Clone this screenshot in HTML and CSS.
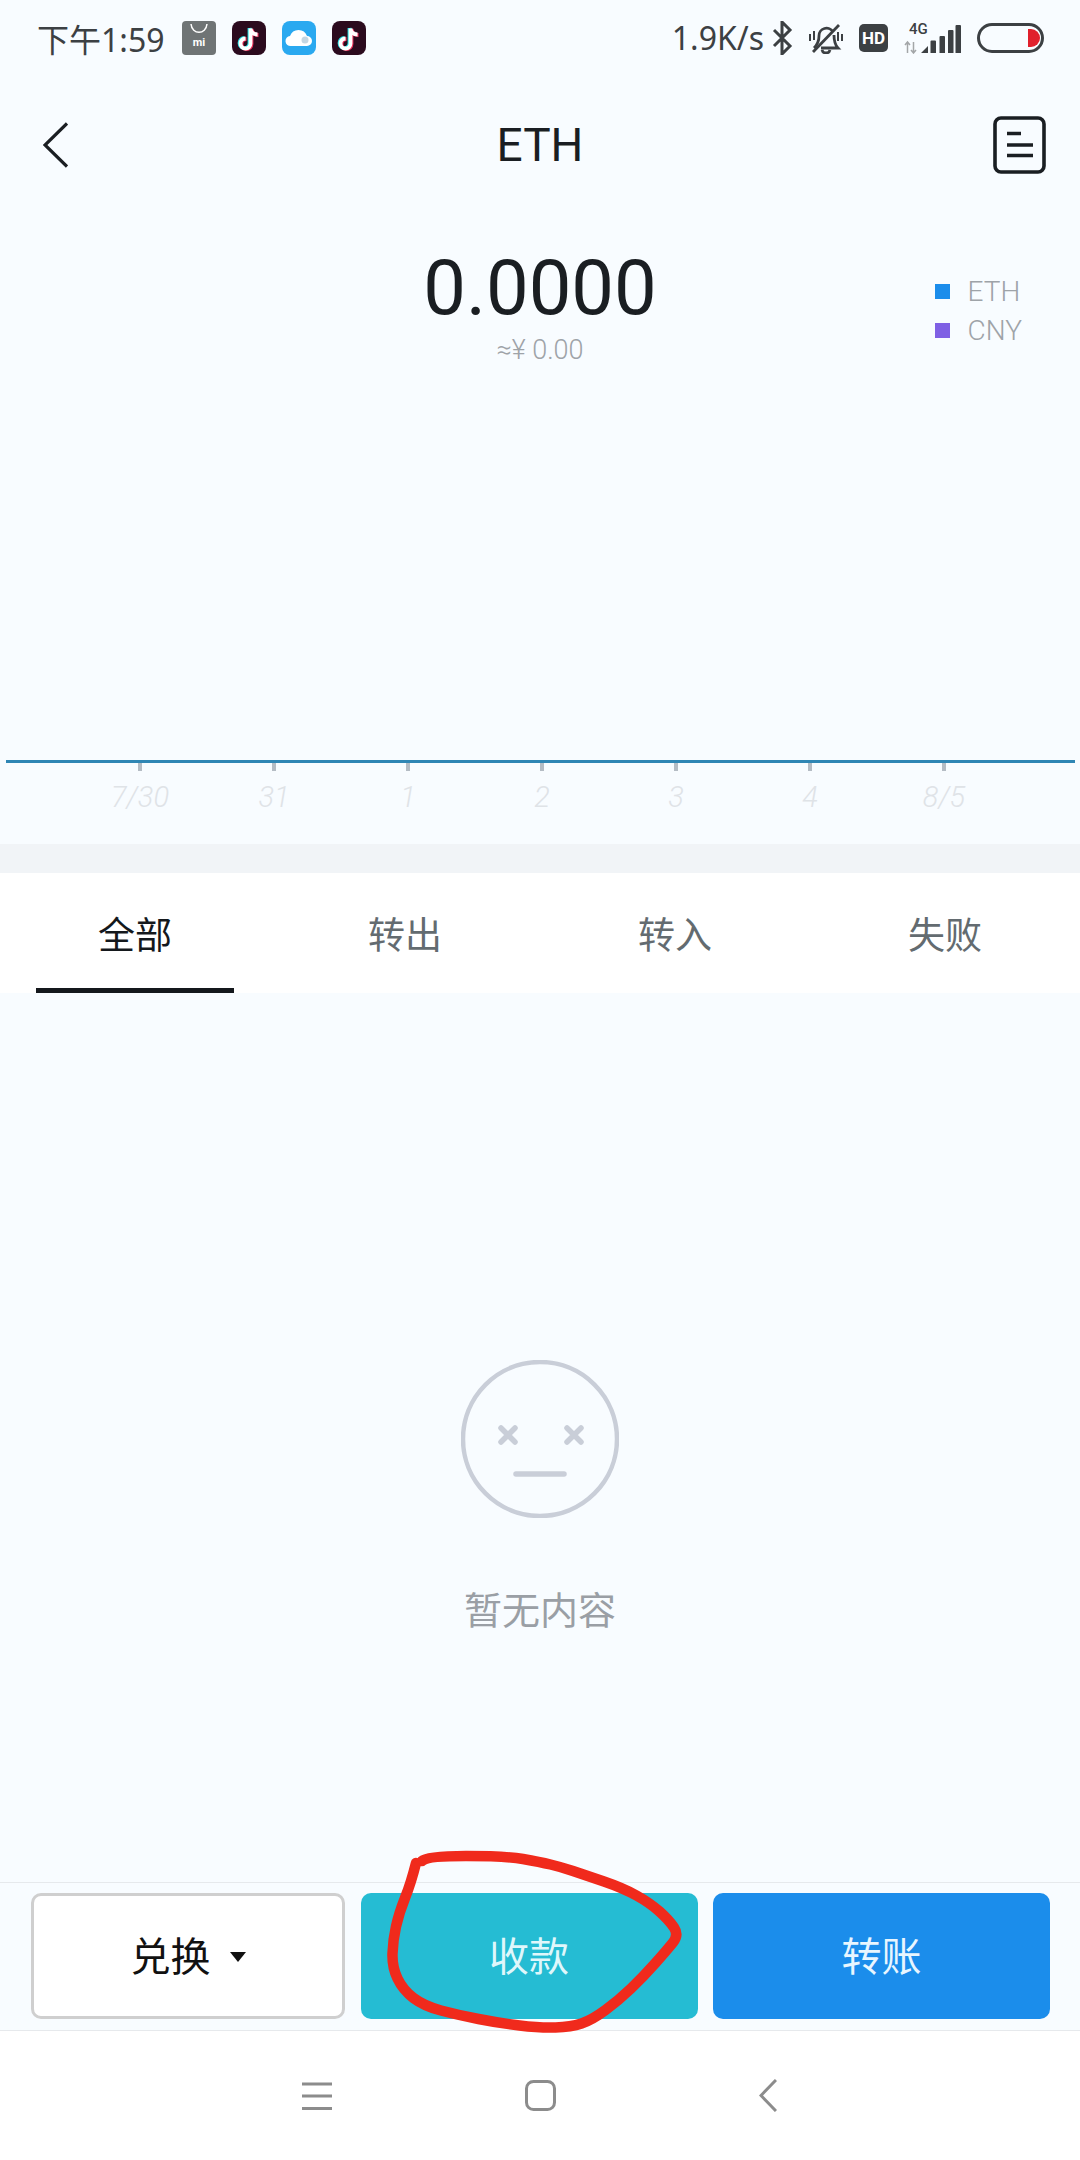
FILE: index.html
```html
<!DOCTYPE html>
<html lang="zh-CN">
<head>
    <meta charset="UTF-8">
    <meta name="viewport" content="width=device-width, initial-scale=1.0">
    <title>ETH</title>
    <link rel="stylesheet" href="styles.css">
</head>
<body>
    <div class="page">
        <svg class="defs" width="0" height="0">
            <symbol id="tiktok" viewBox="0 0 34 34">
                <rect width="34" height="34" rx="8" fill="#2b0b1e"/>
                <path d="M17.500 7v15a5 5 0 1 1-5-5M17.500 7c.5 3.500 3 6 7 6" fill="none" stroke="#25e0e6" stroke-width="3.800"/>
                <path d="M19.500 8v15a5 5 0 1 1-5-5M19.500 8c.5 3.500 3 6 7 6" fill="none" stroke="#f0305a" stroke-width="3.800"/>
                <path d="M18.500 7.500v15a5 5 0 1 1-5-5M18.500 7.500c.5 3.500 3 6 7 6" fill="none" stroke="#fff" stroke-width="3.800"/>
            </symbol>
        </svg>

        <div class="status">
            <span class="time">下午1:59</span>
            <div class="notifs">
                <svg class="notif" viewBox="0 0 34 34">
                    <rect width="34" height="34" rx="4" fill="#6f7475"/>
                    <path d="M9 3c1 11 15 11 16 0" fill="none" stroke="#fff" stroke-width="1.500"/>
                    <text x="17" y="25" class="mi-text">mi</text>
                </svg>
                <svg class="notif"><use href="#tiktok"/></svg>
                <svg class="notif" viewBox="0 0 34 34">
                    <rect width="34" height="34" rx="8" fill="#2aa9f0"/>
                    <path d="M9 25a5 5 0 0 1-1-10 9 9 0 0 1 17 0 5 5 0 0 1 0 10z" fill="#fff"/>
                    <circle cx="23" cy="19" r="3.500" fill="#c5d6e2"/>
                </svg>
                <svg class="notif"><use href="#tiktok"/></svg>
            </div>
            <div class="sysicons">
                <span class="speed">1.9K/s</span>
                <svg class="bt" width="21" height="34" viewBox="0 0 21 34">
                    <path d="M2 9l16 16-8 8V1l8 8L2 25" fill="none" stroke="#3c4043" stroke-width="3"/>
                </svg>
                <svg class="sys" width="34" height="31" viewBox="0 0 34 31">
                    <path d="M5 25c3-3 5-6 5-12a7.500 7.500 0 0 1 14-4M25 12c0 6 1 10 4 13H12M13 27c1 4 7 4 8 0" fill="none" stroke="#3c4043" stroke-width="2.800"/>
                    <path d="M4 29L30 2" stroke="#3c4043" stroke-width="2.800"/>
                    <path d="M1 11v7M5 8v9M29 9v9M33 11v7" stroke="#3c4043" stroke-width="2"/>
                </svg>
                <span class="hd sys">HD</span>
                <svg class="sys" width="57" height="31" viewBox="0 0 57 31">
                    <text x="5" y="11" class="net-text">4G</text>
                    <path d="M3.500 19v11M1 22l2.500-3 2.500 3M9.500 30V19M7 27l2.500 3 2.500-3" fill="none" stroke="#a3a6a8" stroke-width="1.500"/>
                    <path d="M17 30l7-7v7zM26.500 18.500a1 1 0 0 1 1-1h3.500a1 1 0 0 1 1 1V30h-5.500zM35.500 14a1 1 0 0 1 1-1h3.500a1 1 0 0 1 1 1v16h-5.500zM44 8a1 1 0 0 1 1-1h3.500a1 1 0 0 1 1 1v22H44zM51.500 3a1 1 0 0 1 1-1H56a1 1 0 0 1 1 1v27h-5.500z" fill="#3c4043"/>
                </svg>
                <svg class="sys" width="67" height="30" viewBox="0 0 67 30">
                    <rect x="1.500" y="1.500" width="64" height="27" rx="13.500" fill="none" stroke="#3c4043" stroke-width="3"/>
                    <path d="M51 6h3a9 9 0 0 1 0 18h-3z" fill="#e0202c"/>
                </svg>
            </div>
        </div>

        <div class="topbar">
            <svg width="25" height="46" viewBox="0 0 25 46">
                <path d="M24 1.500L2 23l22 21.500" fill="none" stroke="#1a1e22" stroke-width="3.200"/>
            </svg>
            <span class="title">ETH</span>
            <svg class="doc" width="53" height="58" viewBox="0 0 53 58">
                <rect x="2" y="2" width="49" height="54" rx="6" fill="none" stroke="#1a1e22" stroke-width="3.600"/>
                <path d="M14 17.500h14M14 29h26M14 39.500h26" stroke="#1a1e22" stroke-width="3.400"/>
            </svg>
        </div>

        <div class="balance">
            <div></div>
            <div class="amount">
                <div class="amount-value">0.0000</div>
                <div class="amount-cny">≈¥ 0.00</div>
            </div>
            <div class="legend">
                <div class="legend-row"><i class="dot dot-eth"></i>ETH</div>
                <div class="legend-row"><i class="dot dot-cny"></i>CNY</div>
            </div>
        </div>

        <div class="chart">
            <div class="chart-line"></div>
            <div class="axis">
                <div class="axis-item"><i class="tick"></i><span>7/30</span></div>
                <div class="axis-item"><i class="tick"></i><span>31</span></div>
                <div class="axis-item"><i class="tick"></i><span>1</span></div>
                <div class="axis-item"><i class="tick"></i><span>2</span></div>
                <div class="axis-item"><i class="tick"></i><span>3</span></div>
                <div class="axis-item"><i class="tick"></i><span>4</span></div>
                <div class="axis-item"><i class="tick"></i><span>8/5</span></div>
            </div>
        </div>

        <div class="band"></div>

        <div class="tabs">
            <div class="tab active">全部</div>
            <div class="tab">转出</div>
            <div class="tab">转入</div>
            <div class="tab">失败</div>
        </div>

        <div class="empty">
            <svg width="158" height="158" viewBox="0 0 158 158">
                <circle cx="79" cy="79" r="77" fill="none" stroke="#c9ced8" stroke-width="4.500"/>
                <path d="M40 68l14 14M54 68L40 82M106 68l14 14M120 68l-14 14" stroke="#c9ced8" stroke-width="5.500" stroke-linecap="round"/>
                <path d="M55 114h48" stroke="#c9ced8" stroke-width="5.500" stroke-linecap="round"/>
            </svg>
            <div class="empty-text">暂无内容</div>
        </div>

        <div class="actions">
            <div class="btn btn-swap">兑换<i class="caret"></i></div>
            <div class="btn btn-receive">收款</div>
            <div class="btn btn-send">转账</div>
        </div>

        <div class="nav">
            <svg class="nav-menu" width="30" height="28" viewBox="0 0 30 28">
                <path d="M0 2h30M0 14h30M0 26.500h30" stroke="#8c8c8c" stroke-width="3"/>
            </svg>
            <svg class="nav-home" width="31" height="31" viewBox="0 0 31 31">
                <rect x="1.500" y="1.500" width="28" height="28" rx="7" fill="none" stroke="#8c8c8c" stroke-width="3"/>
            </svg>
            <svg class="nav-back" width="18" height="33" viewBox="0 0 18 33">
                <path d="M17 1L2 16.500 17 32" fill="none" stroke="#8c8c8c" stroke-width="3"/>
            </svg>
        </div>

        <!-- red marker drawn over the screenshot -->
        <svg class="scribble" width="1080" height="2160" viewBox="0 0 1080 2160">
            <path d="M416 1863Q411 1883 405 1898Q399 1913 396 1926.500Q393 1940 392.500 1953.500Q392 1967 397.500 1978.500Q403 1990 413.500 1998Q424 2006 441 2010.500Q458 2015 478.500 2019Q499 2023 519.500 2025.500Q540 2028 555.500 2027.500Q571 2027 581.500 2023.500Q592 2020 605.500 2010Q619 2000 631 1988.500Q643 1977 655 1963.500Q667 1950 673 1942.500Q679 1935 674 1927.500Q669 1920 659.500 1911.500Q650 1903 636.500 1895.500Q623 1888 604 1881.500Q585 1875 573 1871Q561 1867 550.500 1864.500Q540 1862 523 1859Q506 1856 466 1856Q427 1856 422 1861" fill="none" stroke="#f02a1c" stroke-width="10.500" stroke-linecap="round" stroke-linejoin="round"/>
        </svg>
    </div>
</body>
</html>
```

FILE: styles.css
```css
* {
    box-sizing: border-box;
}
body {
    margin: 0;
    font-family: Roboto, "Noto Sans CJK SC", sans-serif;
}
.page {
    position: relative;
    width: 1080px;
    height: 2160px;
    overflow: hidden;
    display: flex;
    flex-direction: column;
    background-color: #f8fcff;
}
.defs {
    position: absolute;
}

/* status bar */
.status {
    display: flex;
    align-items: center;
    height: 76px;
    padding: 0 36px 0 37px;
    color: #3c4043;
}
.time {
    width: 145px;
    font-family: "Noto Sans", "Noto Sans CJK SC", sans-serif;
    font-size: 32px;
    white-space: nowrap;
}
.notifs {
    display: flex;
    gap: 16px;
}
.notif {
    width: 34px;
    height: 34px;
}
.mi-text {
    font-family: Roboto, sans-serif;
    font-size: 11px;
    font-weight: 700;
    fill: #fff;
    text-anchor: middle;
}
.sysicons {
    display: flex;
    align-items: center;
    margin-left: auto;
}
.sys {
    margin-left: 16px;
}
.speed {
    font-family: "Noto Sans", sans-serif;
    font-size: 32px;
    line-height: 44px;
    white-space: nowrap;
}
.bt {
    margin-left: 8px;
}
.hd {
    width: 29px;
    height: 28px;
    border-radius: 5px;
    background-color: #3c4043;
    color: #fff;
    font-size: 17px;
    font-weight: 700;
    line-height: 28px;
    text-align: center;
}
.net-text {
    font-family: Roboto, sans-serif;
    font-size: 15px;
    font-weight: 500;
    fill: #3c4043;
}

/* header */
.topbar {
    display: grid;
    grid-template-columns: 1fr auto 1fr;
    align-items: center;
    height: 98px;
    padding: 40px 34px 0 43px;
}
.title {
    font-size: 46px;
    line-height: 58px;
    color: #1a1e22;
    transform: translateX(-4.500px);
}
.doc {
    justify-self: end;
}

/* balance */
.balance {
    display: grid;
    grid-template-columns: 1fr auto 1fr;
    height: 194px;
    padding-top: 70px;
}
.amount {
    text-align: center;
}
.amount-value {
    font-size: 76px;
    line-height: 88px;
    color: #1a1e22;
}
.amount-cny {
    font-size: 27px;
    line-height: 36px;
    font-weight: 300;
    color: #9ea3a8;
}
.legend {
    justify-self: end;
    margin: 28px 58px 0 0;
    font-size: 28px;
    font-weight: 300;
    color: #9ea3a8;
}
.legend-row {
    display: flex;
    align-items: center;
    gap: 18px;
    height: 39px;
}
.dot {
    width: 15px;
    height: 15px;
}
.dot-eth {
    background-color: #1b8deb;
}
.dot-cny {
    background-color: #7f60e4;
}

/* chart */
.chart {
    height: 476px;
    padding-top: 392px;
}
.chart-line {
    height: 3px;
    margin: 0 5px 0 6px;
    background-color: #2f86b4;
}
.axis {
    display: flex;
    padding-left: 73px;
}
.axis-item {
    display: flex;
    flex-direction: column;
    align-items: center;
    width: 134px;
}
.tick {
    width: 4px;
    height: 8px;
    background-color: #b4bcc4;
}
.axis-item span {
    margin-top: 9px;
    font-size: 29px;
    line-height: 34px;
    font-style: italic;
    font-weight: 300;
    color: #dfe3e7;
}
.band {
    height: 29px;
    background-color: #f1f4f7;
}

/* tabs */
.tabs {
    display: grid;
    grid-template-columns: repeat(4, 270px);
    height: 120px;
    background-color: #fff;
}
.tab {
    height: 120px;
    margin: 0 36px;
    padding-top: 42px;
    font-size: 37px;
    line-height: 44px;
    text-align: center;
    color: #636b70;
}
.tab.active {
    border-bottom: 5px solid #14181c;
    color: #14181c;
}

/* empty state */
.empty {
    flex: 1;
    display: flex;
    flex-direction: column;
    align-items: center;
    padding-top: 367px;
}
.empty-text {
    margin-top: 68px;
    font-size: 38px;
    line-height: 50px;
    color: #9a9fa5;
}

/* bottom buttons */
.actions {
    display: grid;
    grid-template-columns: 314px 337px 337px;
    column-gap: 15.500px;
    height: 149px;
    padding: 10px 0 11px 31px;
    border-top: 1px solid #e6e9ec;
    border-bottom: 1px solid #e6e9ec;
}
.btn {
    display: flex;
    align-items: center;
    justify-content: center;
    padding-bottom: 4px;
    border-radius: 10px;
    font-size: 40px;
}
.btn-swap {
    border: 3px solid #cfcfcf;
    background-color: #fff;
    color: #111;
}
.caret {
    width: 0;
    height: 0;
    margin: 6px 0 0 19px;
    border-top: 10px solid #111;
    border-left: 8px solid transparent;
    border-right: 8px solid transparent;
}
.btn-receive {
    background-color: #25bcd3;
    color: #dff7fb;
}
.btn-send {
    background-color: #1b8deb;
    color: #e8f6ff;
}

/* system nav */
.nav {
    display: flex;
    align-items: center;
    height: 129px;
    padding-left: 302px;
    background-color: #fff;
}
.nav-home {
    margin-left: 193px;
}
.nav-back {
    margin-left: 203px;
}

.scribble {
    position: absolute;
    top: 0;
    left: 0;
    pointer-events: none;
}
```
